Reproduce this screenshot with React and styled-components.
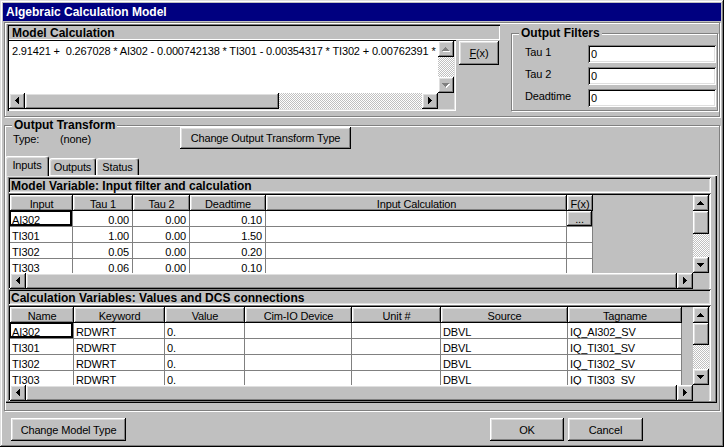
import React from 'react';
import styled, { createGlobalStyle, css } from 'styled-components';

const GlobalStyle = createGlobalStyle`
  html, body { margin: 0; padding: 0; background: #c0c0c0; }
  body { font-family: "Liberation Sans", Arial, sans-serif; font-size: 11px; letter-spacing: -0.15px; color: #000; }
  * { box-sizing: border-box; }
`;

const raised = css`
  box-shadow: inset -1px -1px #000, inset 1px 1px #fff, inset -2px -2px #808080, inset 2px 2px #dfdfdf;
`;
const sunken = css`
  box-shadow: inset 1px 1px #808080, inset -1px -1px #fff, inset 2px 2px #000, inset -2px -2px #dfdfdf;
`;
const etched = css`
  border: 1px solid #808080;
  box-shadow: inset 1px 1px #fff, 1px 1px #fff;
`;
const boldText = css`
  font-weight: bold;
  font-size: 12px;
  line-height: 13px;
  letter-spacing: 0;
  white-space: nowrap;
`;

const Window = styled.div`
  width: 724px;
  height: 447px;
  background: #c0c0c0;
  padding: 3px;
  box-shadow: inset -1px -1px #000, inset 1px 1px #dfdfdf, inset -2px -2px #808080, inset 2px 2px #fff;
  display: flex;
  flex-direction: column;
  overflow: hidden;
`;

const TitleBar = styled.div`
  height: 18px;
  flex-shrink: 0;
  background: #000080;
  color: #fff;
  ${boldText};
  line-height: 14px;
  padding: 2px 0 0 3px;
`;

const TopFrame = styled.div`
  ${etched};
  margin: 1px 1px 0 1px;
  height: 95px;
  flex-shrink: 0;
  display: flex;
  align-items: flex-start;
  padding: 1px 1px 0 2px;
`;

const ModelPanel = styled.div`
  width: 493px;
  height: 87px;
  display: flex;
  flex-direction: column;
  flex-shrink: 0;
`;

const PanelHeader = styled.div`
  height: 16px;
  flex-shrink: 0;
  box-shadow: inset 1px 1px #808080, inset 2px 2px #000, inset -1px -1px #fff;
  ${boldText};
  padding: 3px 0 0 5px;
`;

const ModelBody = styled.div`
  flex: 1;
  display: flex;
`;

const EditFrame = styled.div`
  width: 449px;
  flex-shrink: 0;
  padding: 1px 2px 2px 2px;
  box-shadow: inset 1px 0 #808080, inset 2px 0 #000, inset 0 1px #000, inset -1px -1px #fff, inset -2px -2px #dfdfdf;
  display: grid;
  grid-template-columns: minmax(0, 1fr) 16px;
  grid-template-rows: minmax(0, 1fr) 16px;
`;

const EditText = styled.div`
  background: #fff;
  white-space: pre;
  overflow: hidden;
  min-width: 0;
  padding: 4px 3px 0 3px;
  line-height: 13px;
`;

const FxArea = styled.div`
  flex: 1;
  padding: 1px 0 0 3px;
`;

const Button = styled.button`
  width: ${p => p.$w}px;
  height: ${p => p.$h}px;
  flex-shrink: 0;
  border: none;
  padding: 0;
  margin: 0 0 0 ${p => p.$ml || 0}px;
  background: #c0c0c0;
  font-family: "Liberation Sans", Arial, sans-serif;
  font-size: 11px;
  letter-spacing: -0.15px;
  color: #000;
  ${raised};
  display: flex;
  align-items: center;
  justify-content: center;
  white-space: nowrap;
`;

const Hotkey = styled.span`
  text-decoration: underline;
`;

const GroupBox = styled.div`
  ${etched};
  display: flex;
  flex-direction: column;
`;

const FilterGroup = styled(GroupBox)`
  margin-left: 11px;
  margin-top: 9px;
  width: 208px;
  height: 78px;
  padding-right: 1px;
`;

const Legend = styled.div`
  width: fit-content;
  margin: -7px 0 ${p => p.$mb}px 7px;
  padding: 0 2px;
  background: #c0c0c0;
  ${boldText};
`;

const FilterRows = styled.div`
  display: grid;
  grid-template-columns: 63px 128px;
  row-gap: 4px;
  padding-left: 13px;
`;

const FilterLabel = styled.div`
  height: 18px;
  line-height: 13px;
  padding-top: 1px;
`;

const FieldBox = styled.div`
  height: 18px;
  background: #fff;
  ${sunken};
  padding: 0 3px;
  line-height: 18px;
`;

const TransformGroup = styled(GroupBox)`
  margin: 8px 1px 0 1px;
  padding: 0 2px 7px 0;
  flex-shrink: 0;
`;

const TypeRow = styled.div`
  height: 22px;
  display: flex;
  align-items: center;
  padding-left: 8px;
`;

const TypeText = styled.div`
  width: ${p => p.$w}px;
  flex-shrink: 0;
  padding-top: 1px;
`;

const TabStrip = styled.div`
  margin-top: 7px;
  margin-bottom: -1px;
  height: 20px;
  display: flex;
  align-items: flex-end;
  position: relative;
  z-index: 1;
`;

const Tab = styled.div`
  width: ${p => p.$w}px;
  height: ${p => (p.$active ? 20 : 17)}px;
  margin-bottom: ${p => (p.$active ? 0 : 1)}px;
  background: #c0c0c0;
  border-left: 1px solid #fff;
  border-top: 1px solid #fff;
  border-right: 1px solid #000;
  border-radius: 3px 3px 0 0;
  box-shadow: inset -1px 0 #808080, inset 1px 1px #dfdfdf;
  text-align: center;
  padding-top: 2px;
  line-height: 12px;
  white-space: nowrap;
`;

const TabPanel = styled.div`
  height: 228px;
  box-shadow: inset 1px 1px #fff, inset -1px -1px #000, inset -2px -2px #808080, inset 2px 2px #dfdfdf;
  padding: 2px 6px 2px 3px;
  display: flex;
  flex-direction: column;
`;

const SectionBar = styled.div`
  height: 16px;
  flex-shrink: 0;
  ${sunken};
  ${boldText};
  padding: 3px 0 0 3px;
  overflow: hidden;
`;

const GridFrame = styled.div`
  ${sunken};
  padding: 2px 2px 0 2px;
  height: 96px;
  flex-shrink: 0;
  display: grid;
  grid-template-columns: minmax(0, 1fr) 16px;
  grid-template-rows: minmax(0, 1fr) 16px;
`;

const GridBody = styled.div`
  overflow: hidden;
  min-width: 0;
  background: #c0c0c0;
`;

const HeadRow = styled.div`
  display: flex;
  height: 16px;
`;

const HeadCell = styled.div`
  width: ${p => p.$w}px;
  flex-shrink: 0;
  ${raised};
  text-align: center;
  padding-top: 3px;
  line-height: 12px;
  white-space: nowrap;
  overflow: hidden;
`;

const DataRow = styled.div`
  display: flex;
  height: 16px;
`;

const Cell = styled.div`
  width: ${p => p.$w}px;
  flex-shrink: 0;
  height: 16px;
  background: #fff;
  border-right: 1px solid #808080;
  border-bottom: 1px solid #808080;
  text-align: ${p => (p.$align === 'right' ? 'right' : 'left')};
  padding: 3px ${p => (p.$align === 'right' ? 3 : 0)}px 0 ${p => (p.$align === 'right' ? 0 : 2)}px;
  line-height: 12px;
  white-space: nowrap;
  overflow: hidden;
  ${p => p.$focus && css`box-shadow: inset 1px 1px #000, inset -2px -2px #000;`}
  ${p => p.$plain && css`padding: 0; background: #c0c0c0;`}
`;

const CellButton = styled.div`
  width: 100%;
  height: 100%;
  ${raised};
  text-align: center;
  line-height: 12px;
  padding-top: 2px;
`;

const VScroll = styled.div`
  display: flex;
  flex-direction: column;
`;

const HScroll = styled.div`
  display: flex;
  min-width: 0;
`;

const ScrollBtn = styled.div`
  width: 16px;
  height: 16px;
  flex-shrink: 0;
  background: #c0c0c0;
  ${raised};
  display: flex;
  align-items: center;
  justify-content: center;
`;

const Thumb = styled.div`
  background: #c0c0c0;
  ${raised};
  flex: ${p => (p.$grow ? 1 : '0 0 auto')};
  width: ${p => (p.$w ? `${p.$w}px` : 'auto')};
  height: ${p => (p.$h ? `${p.$h}px` : 'auto')};
`;

const Track = styled.div`
  flex: 1;
  background-color: #c0c0c0;
  background-image: repeating-conic-gradient(#fff 0% 25%, #c0c0c0 0% 50%);
  background-size: 2px 2px;
`;

const Corner = styled.div`
  background: #c0c0c0;
`;

const ButtonRow = styled.div`
  margin-top: 7px;
  height: 23px;
  flex-shrink: 0;
  display: flex;
  padding: 0 78px 0 8px;
`;

const Spacer = styled.div`
  flex: 1;
`;

const ArrowSvg = styled.svg`
  display: block;
`;

const SHAPES = {
  up: [[3, 0, 1, 1], [2, 1, 3, 1], [1, 2, 5, 1], [0, 3, 7, 1]],
  down: [[0, 0, 7, 1], [1, 1, 5, 1], [2, 2, 3, 1], [3, 3, 1, 1]],
  left: [[3, 0, 1, 7], [2, 1, 1, 5], [1, 2, 1, 3], [0, 3, 1, 1]],
  right: [[0, 0, 1, 7], [1, 1, 1, 5], [2, 2, 1, 3], [3, 3, 1, 1]],
};

function Arrow({ dir, disabled }) {
  const vertical = dir === 'up' || dir === 'down';
  const w = vertical ? 8 : 5;
  const h = vertical ? 5 : 8;
  const s = SHAPES[dir];
  return (
    <ArrowSvg width={w} height={h} viewBox={`0 0 ${w} ${h}`} shapeRendering="crispEdges">
      {disabled && s.map(([x, y, rw, rh], i) => (
        <rect key={`s${i}`} x={x + 1} y={y + 1} width={rw} height={rh} fill="#fff" />
      ))}
      {s.map(([x, y, rw, rh], i) => (
        <rect key={i} x={x} y={y} width={rw} height={rh} fill={disabled ? '#808080' : '#000'} />
      ))}
    </ArrowSvg>
  );
}

const BTN = '__button__';

function DataGrid({ columns, rows, thumb }) {
  return (
    <GridFrame>
      <GridBody>
        <HeadRow>
          {columns.map(c => (
            <HeadCell key={c.label} $w={c.w}>{c.label}</HeadCell>
          ))}
        </HeadRow>
        {rows.map((r, i) => (
          <DataRow key={i}>
            {columns.map((c, j) => {
              const v = r[j];
              if (v === BTN) {
                return (
                  <Cell key={j} $w={c.w} $plain>
                    <CellButton>...</CellButton>
                  </Cell>
                );
              }
              return (
                <Cell key={j} $w={c.w} $align={c.align} $focus={i === 0 && j === 0}>
                  {v}
                </Cell>
              );
            })}
          </DataRow>
        ))}
      </GridBody>
      <VScroll>
        <ScrollBtn><Arrow dir="up" /></ScrollBtn>
        <Thumb $h={thumb} />
        <Track />
        <ScrollBtn><Arrow dir="down" /></ScrollBtn>
      </VScroll>
      <HScroll>
        <ScrollBtn><Arrow dir="left" /></ScrollBtn>
        <Thumb $grow />
        <ScrollBtn><Arrow dir="right" /></ScrollBtn>
      </HScroll>
      <Corner />
    </GridFrame>
  );
}

const inputCols = [
  { label: 'Input', w: 63 },
  { label: 'Tau 1', w: 60, align: 'right' },
  { label: 'Tau 2', w: 57, align: 'right' },
  { label: 'Deadtime', w: 76, align: 'right' },
  { label: 'Input Calculation', w: 301 },
  { label: 'F(x)', w: 26 },
];

const inputRows = [
  ['AI302', '0.00', '0.00', '0.10', '', BTN],
  ['TI301', '1.00', '0.00', '1.50', '', ''],
  ['TI302', '0.05', '0.00', '0.20', '', ''],
  ['TI303', '0.06', '0.00', '0.10', '', ''],
];

const calcCols = [
  { label: 'Name', w: 64 },
  { label: 'Keyword', w: 91 },
  { label: 'Value', w: 80 },
  { label: 'Cim-IO Device', w: 107 },
  { label: 'Unit #', w: 89 },
  { label: 'Source', w: 127 },
  { label: 'Tagname', w: 114 },
];

const calcRows = ['AI302', 'TI301', 'TI302', 'TI303'].map(n => [
  n, 'RDWRT', '0.', '', '', 'DBVL', `IQ_${n}_SV`,
]);

const formula =
  '2.91421 +  0.267028 * AI302 - 0.000742138 * TI301 - 0.00354317 * TI302 + 0.00762391 * TI303';

const filters = [
  ['Tau 1', '0'],
  ['Tau 2', '0'],
  ['Deadtime', '0'],
];

export default function App() {
  return (
    <>
      <GlobalStyle />
      <Window>
        <TitleBar>Algebraic Calculation Model</TitleBar>
        <TopFrame>
          <ModelPanel>
            <PanelHeader>Model Calculation</PanelHeader>
            <ModelBody>
              <EditFrame>
                <EditText>{formula}</EditText>
                <VScroll>
                  <ScrollBtn><Arrow dir="up" disabled /></ScrollBtn>
                  <Track />
                  <ScrollBtn><Arrow dir="down" disabled /></ScrollBtn>
                </VScroll>
                <HScroll>
                  <ScrollBtn><Arrow dir="left" /></ScrollBtn>
                  <Thumb $w={254} />
                  <Track />
                  <ScrollBtn><Arrow dir="right" /></ScrollBtn>
                </HScroll>
                <Corner />
              </EditFrame>
              <FxArea>
                <Button $w={40} $h={24}><Hotkey>F</Hotkey>(x)</Button>
              </FxArea>
            </ModelBody>
          </ModelPanel>
          <FilterGroup>
            <Legend $mb={5}>Output Filters</Legend>
            <FilterRows>
              {filters.map(([label, value]) => (
                <React.Fragment key={label}>
                  <FilterLabel>{label}</FilterLabel>
                  <FieldBox>{value}</FieldBox>
                </React.Fragment>
              ))}
            </FilterRows>
          </FilterGroup>
        </TopFrame>

        <TransformGroup>
          <Legend $mb={-5}>Output Transform</Legend>
          <TypeRow>
            <TypeText $w={47}>Type:</TypeText>
            <TypeText $w={120}>(none)</TypeText>
            <Button $w={171} $h={22}>Change Output Transform Type</Button>
          </TypeRow>
          <TabStrip>
            <Tab $w={44} $active>Inputs</Tab>
            <Tab $w={47}>Outputs</Tab>
            <Tab $w={43}>Status</Tab>
          </TabStrip>
          <TabPanel>
            <SectionBar>Model Variable: Input filter and calculation</SectionBar>
            <DataGrid columns={inputCols} rows={inputRows} thumb={23} />
            <SectionBar>Calculation Variables: Values and DCS connections</SectionBar>
            <DataGrid columns={calcCols} rows={calcRows} thumb={22} />
          </TabPanel>
        </TransformGroup>

        <ButtonRow>
          <Button $w={115} $h={23}>Change Model Type</Button>
          <Spacer />
          <Button $w={74} $h={23}>OK</Button>
          <Button $w={75} $h={23} $ml={4}>Cancel</Button>
        </ButtonRow>
      </Window>
    </>
  );
}
